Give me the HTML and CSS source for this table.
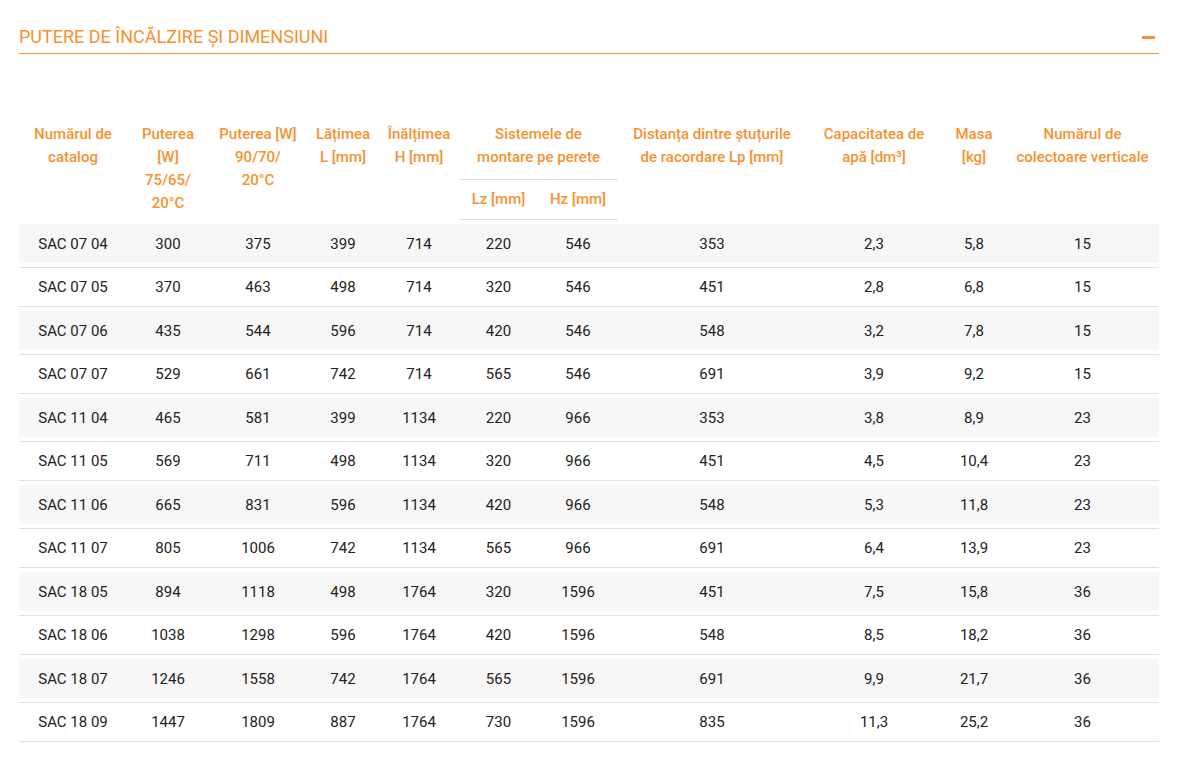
FILE: index.html
```html
<!DOCTYPE html>
<html lang="ro">
<head>
<meta charset="utf-8">
<title>Putere de încălzire și dimensiuni</title>
<link rel="stylesheet" href="styles.css">
</head>
<body>
<div class="page">
  <div class="section-head">
    <h2 class="section-title">PUTERE DE ÎNCĂLZIRE ȘI DIMENSIUNI</h2>
    <span class="toggle" aria-label="Restrânge"></span>
  </div>
  <table class="specs">
    <colgroup>
      <col class="c1"><col class="c2"><col class="c3"><col class="c4"><col class="c5"><col class="c6"><col class="c7"><col class="c8"><col class="c9"><col class="c10"><col class="c11">
    </colgroup>
    <thead>
      <tr>
        <th rowspan="2">Numărul de<br>catalog</th>
        <th rowspan="2">Puterea<br>[W]<br>75/65/<br>20°C</th>
        <th rowspan="2">Puterea [W]<br>90/70/<br>20°C</th>
        <th rowspan="2">Lățimea<br>L [mm]</th>
        <th rowspan="2">Înălțimea<br>H [mm]</th>
        <th colspan="2" class="group">Sistemele de<br>montare pe perete</th>
        <th rowspan="2">Distanța dintre ștuțurile<br>de racordare Lp [mm]</th>
        <th rowspan="2">Capacitatea de<br>apă [dm³]</th>
        <th rowspan="2">Masa<br>[kg]</th>
        <th rowspan="2">Numărul de<br>colectoare verticale</th>
      </tr>
      <tr>
        <th class="sub">Lz [mm]</th>
        <th class="sub">Hz [mm]</th>
      </tr>
    </thead>
    <tbody>
      <tr><td>SAC 07 04</td><td>300</td><td>375</td><td>399</td><td>714</td><td>220</td><td>546</td><td>353</td><td>2,3</td><td>5,8</td><td>15</td></tr>
      <tr><td>SAC 07 05</td><td>370</td><td>463</td><td>498</td><td>714</td><td>320</td><td>546</td><td>451</td><td>2,8</td><td>6,8</td><td>15</td></tr>
      <tr><td>SAC 07 06</td><td>435</td><td>544</td><td>596</td><td>714</td><td>420</td><td>546</td><td>548</td><td>3,2</td><td>7,8</td><td>15</td></tr>
      <tr><td>SAC 07 07</td><td>529</td><td>661</td><td>742</td><td>714</td><td>565</td><td>546</td><td>691</td><td>3,9</td><td>9,2</td><td>15</td></tr>
      <tr><td>SAC 11 04</td><td>465</td><td>581</td><td>399</td><td>1134</td><td>220</td><td>966</td><td>353</td><td>3,8</td><td>8,9</td><td>23</td></tr>
      <tr><td>SAC 11 05</td><td>569</td><td>711</td><td>498</td><td>1134</td><td>320</td><td>966</td><td>451</td><td>4,5</td><td>10,4</td><td>23</td></tr>
      <tr><td>SAC 11 06</td><td>665</td><td>831</td><td>596</td><td>1134</td><td>420</td><td>966</td><td>548</td><td>5,3</td><td>11,8</td><td>23</td></tr>
      <tr><td>SAC 11 07</td><td>805</td><td>1006</td><td>742</td><td>1134</td><td>565</td><td>966</td><td>691</td><td>6,4</td><td>13,9</td><td>23</td></tr>
      <tr><td>SAC 18 05</td><td>894</td><td>1118</td><td>498</td><td>1764</td><td>320</td><td>1596</td><td>451</td><td>7,5</td><td>15,8</td><td>36</td></tr>
      <tr><td>SAC 18 06</td><td>1038</td><td>1298</td><td>596</td><td>1764</td><td>420</td><td>1596</td><td>548</td><td>8,5</td><td>18,2</td><td>36</td></tr>
      <tr><td>SAC 18 07</td><td>1246</td><td>1558</td><td>742</td><td>1764</td><td>565</td><td>1596</td><td>691</td><td>9,9</td><td>21,7</td><td>36</td></tr>
      <tr><td>SAC 18 09</td><td>1447</td><td>1809</td><td>887</td><td>1764</td><td>730</td><td>1596</td><td>835</td><td>11,3</td><td>25,2</td><td>36</td></tr>
    </tbody>
  </table>
</div>
</body>
</html>
```
FILE: styles.css
```css
html, body {
  margin: 0;
  padding: 0;
  background: #ffffff;
}

body {
  font-family: Roboto, "Liberation Sans", sans-serif;
  color: #222222;
}

.page {
  width: 1140px;
  padding: 26px 0 0 19px;
}

.section-head {
  display: flex;
  align-items: center;
  justify-content: space-between;
  border-bottom: 1px solid #f7922f;
  padding-bottom: 5px;
}

.section-title {
  margin: 0;
  font-size: 18px;
  line-height: 22px;
  font-weight: 400;
  color: #f7922f;
  letter-spacing: 0;
}

.toggle {
  display: block;
  width: 13px;
  height: 3px;
  background: #f7922f;
  margin-right: 4px;
}

.specs {
  width: 1140px;
  margin-top: 59px;
  table-layout: fixed;
  border-collapse: separate;
  border-spacing: 0;
  font-size: 15px;
}

.c1 { width: 108px; }
.c2 { width: 82px; }
.c3 { width: 98px; }
.c4 { width: 72px; }
.c5 { width: 80px; }
.c6 { width: 79px; }
.c7 { width: 80px; }
.c8 { width: 188px; }
.c9 { width: 136px; }
.c10 { width: 64px; }
.c11 { width: 153px; }

.specs th {
  color: #f7922f;
  font-weight: 500;
  font-size: 15px;
  line-height: 23px;
  vertical-align: top;
  text-align: center;
  padding: 10px 0 0;
  white-space: nowrap;
}

.specs th.group {
  padding: 10px 0 10px;
}

.specs th.sub {
  vertical-align: middle;
  padding: 8px 0 8px;
  border-top: 1px solid #dddddd;
  border-bottom: 1px solid #dddddd;
}

.specs td {
  text-align: center;
  vertical-align: middle;
  padding: 0;
  height: 38px;
  border-bottom: 1px solid #e0e0e0;
  line-height: 20px;
  color: #222222;
}

.specs tbody tr:nth-child(odd) td {
  height: 47px;
  background: #f7f7f7;
  box-shadow: inset 0 4px 0 #ffffff, inset 0 -4px 0 #ffffff;
}
```
